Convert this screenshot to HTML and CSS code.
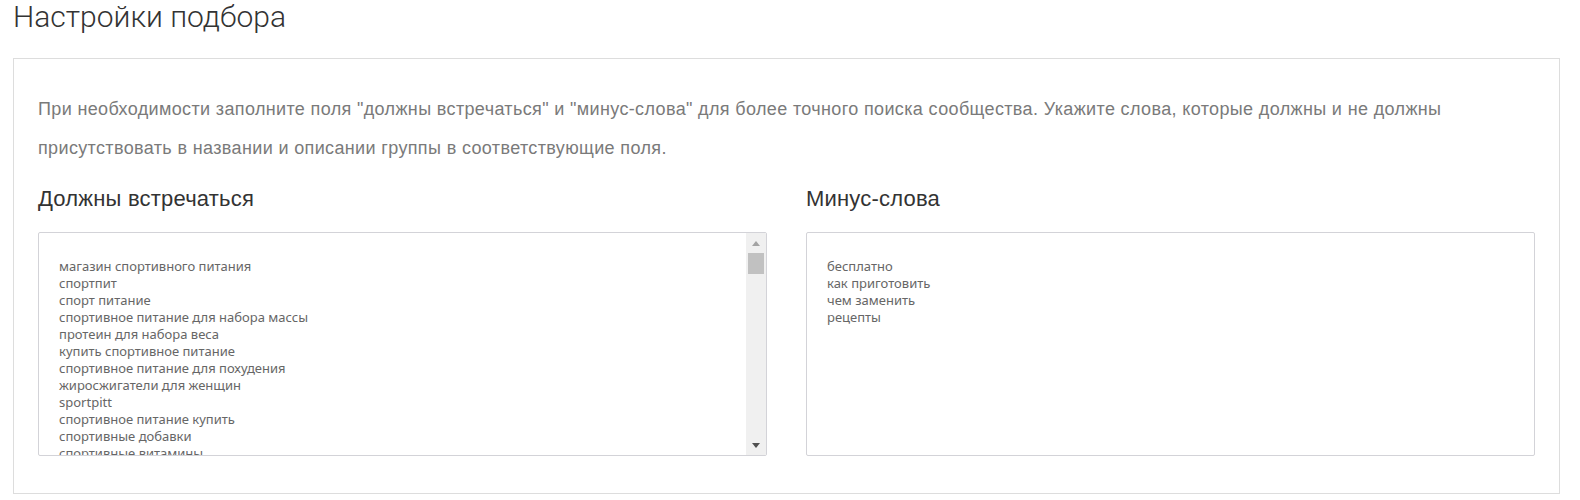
FILE: index.html
```html
<!DOCTYPE html>
<html lang="ru">
<head>
<meta charset="utf-8">
<title>Настройки подбора</title>
<link rel="stylesheet" href="styles.css">
</head>
<body>
<div class="page">
  <h1 class="page-title">Настройки подбора</h1>
  <section class="panel">
    <p class="panel-intro">При необходимости заполните поля "должны встречаться" и "минус-слова" для более точного поиска сообщества. Укажите слова, которые должны и не должны присутствовать в названии и описании группы в соответствующие поля.</p>
    <div class="columns">
      <div class="column">
        <h2 class="column-title">Должны встречаться</h2>
        <div class="field">
          <div class="field-text">магазин спортивного питания
спортпит
спорт питание
спортивное питание для набора массы
протеин для набора веса
купить спортивное питание
спортивное питание для похудения
жиросжигатели для женщин
sportpitt
спортивное питание купить
спортивные добавки
спортивные витамины
протеин купить</div>
          <div class="scrollbar">
            <div class="sb-button"><span class="arrow-up"></span></div>
            <div class="sb-thumb"></div>
            <div class="sb-track"></div>
            <div class="sb-button"><span class="arrow-down"></span></div>
          </div>
        </div>
      </div>
      <div class="column">
        <h2 class="column-title">Минус-слова</h2>
        <div class="field">
          <div class="field-text">бесплатно
как приготовить
чем заменить
рецепты</div>
        </div>
      </div>
    </div>
  </section>
</div>
</body>
</html>
```
FILE: styles.css
```css
html, body {
  margin: 0;
  padding: 0;
  background: #fff;
}

.page {
  width: 1547px;
  padding-left: 13px;
}

.page-title {
  margin: 0 0 25px;
  font-family: Roboto, "Liberation Sans", sans-serif;
  font-weight: 300;
  font-size: 30px;
  line-height: 33px;
  color: #333;
}

.panel {
  box-sizing: border-box;
  width: 1547px;
  height: 436px;
  border: 1px solid #dddddd;
  background: #fff;
  padding: 31px 24px 0;
}

.panel-intro {
  margin: 0;
  font-family: "Liberation Sans", Arial, sans-serif;
  font-size: 18px;
  letter-spacing: 0.36px;
  line-height: 39px;
  color: #7a7a7a;
}

.columns {
  display: grid;
  grid-template-columns: 1fr 1fr;
  column-gap: 39px;
  margin-top: 18px;
}

.column-title {
  margin: 0 0 20px;
  font-family: "Liberation Sans", Arial, sans-serif;
  font-weight: 400;
  font-size: 22px;
  letter-spacing: 0.2px;
  line-height: 26px;
  color: #333;
}

.field {
  box-sizing: border-box;
  display: flex;
  height: 224px;
  border: 1px solid #d3d3d8;
  border-radius: 2px;
  background: #fff;
  overflow: hidden;
}

.field-text {
  flex: 1;
  padding: 25px 20px 0 20px;
  font-family: "Noto Sans", "Open Sans", sans-serif;
  font-size: 13px;
  line-height: 17px;
  color: #666;
  white-space: pre-line;
  overflow: hidden;
}

.scrollbar {
  width: 20px;
  display: flex;
  flex-direction: column;
  background: #f0f0f0;
}

.sb-button {
  height: 20px;
  display: flex;
  align-items: center;
  justify-content: center;
}

.arrow-up {
  width: 0;
  height: 0;
  border-left: 4px solid transparent;
  border-right: 4px solid transparent;
  border-bottom: 5px solid #a3a3a3;
}

.arrow-down {
  width: 0;
  height: 0;
  border-left: 4px solid transparent;
  border-right: 4px solid transparent;
  border-top: 5px solid #505050;
}

.sb-thumb {
  height: 21px;
  margin: 0 2px;
  background: #c1c1c1;
}

.sb-track {
  flex: 1;
}
```
